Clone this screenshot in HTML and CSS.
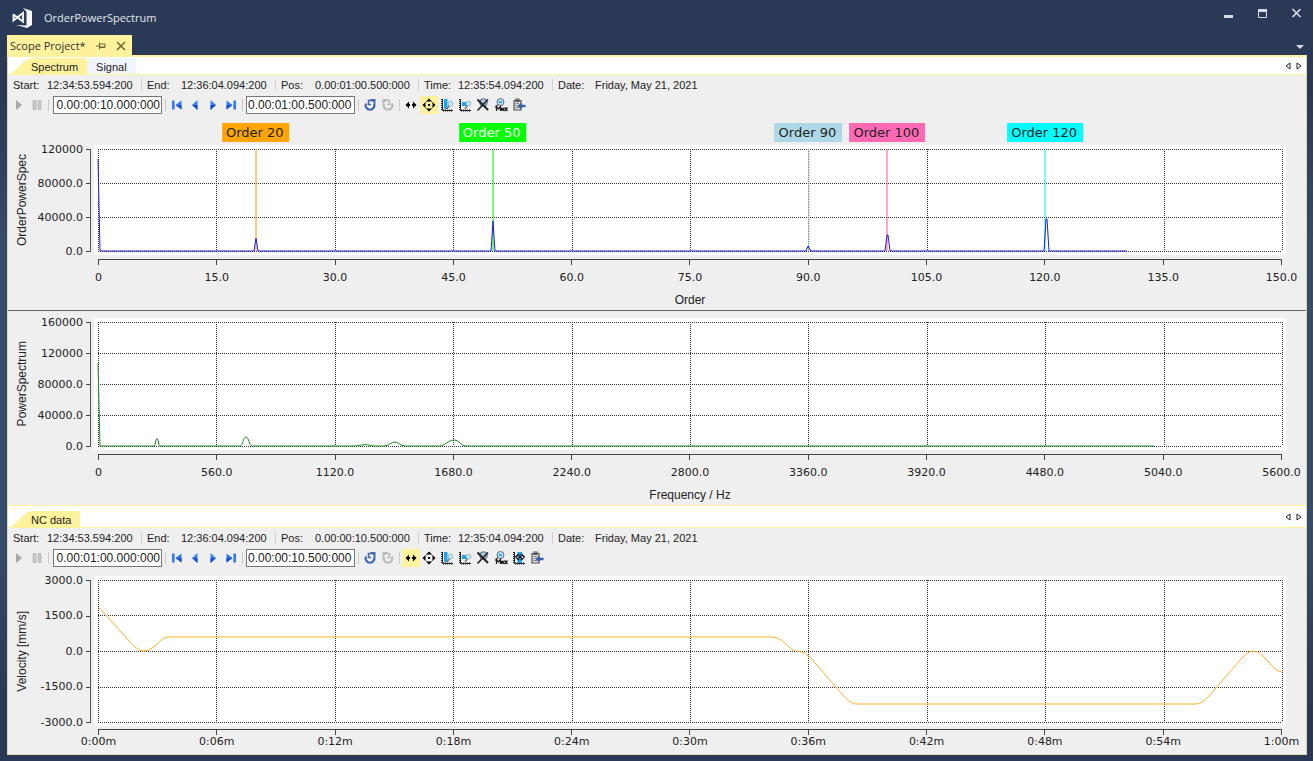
FILE: index.html
```html
<!DOCTYPE html>
<html lang="en">
<head>
<meta charset="utf-8">
<title>OrderPowerSpectrum</title>
<link rel="stylesheet" href="styles.css">
</head>
<body>
<svg class="sprite" aria-hidden="true">
  <symbol id="play" viewBox="0 0 16 16"><path d="M5 3L11 8L5 13Z" fill="#a9a9a9"/></symbol>
  <symbol id="pause" viewBox="0 0 16 16"><path d="M4 3.500H7V12.500H4ZM9 3.500H12V12.500H9Z" fill="#c9c9c9" stroke="#aaa" stroke-width=".6"/></symbol>
  <symbol id="first" viewBox="0 0 16 16"><path d="M3 3.500H5.600V12.500H3ZM12.500 3.500V12.500L6.500 8Z" fill="#3478ee"/><path d="M12.500 8V12.500L6.500 8Z" fill="#1c50c8"/></symbol>
  <symbol id="prev" viewBox="0 0 16 16"><path d="M10.500 3V13L5 8Z" fill="#3c80f4"/><path d="M10.500 8V13L5 8Z" fill="#1c50c8"/></symbol>
  <symbol id="next" viewBox="0 0 16 16"><path d="M5.500 3V13L11 8Z" fill="#3c80f4"/><path d="M5.500 8V13L11 8Z" fill="#1c50c8"/></symbol>
  <symbol id="last" viewBox="0 0 16 16"><path d="M13 3.500H10.400V12.500H13ZM3.500 3.500V12.500L9.500 8Z" fill="#3478ee"/><path d="M3.500 8V12.500L9.500 8Z" fill="#1c50c8"/></symbol>
  <symbol id="undo" viewBox="0 0 16 16"><path d="M4 6.500A4.400 4.400 0 1 0 12 6.500" fill="none" stroke="#4268b4" stroke-width="2.200"/><path d="M10 3.500H6.500V7.500H9" fill="none" stroke="#4268b4" stroke-width="1.600"/><path d="M8 2H13.500V7.500Z" fill="#4268b4"/></symbol>
  <symbol id="redo" viewBox="0 0 16 16"><path d="M12 6.500A4.400 4.400 0 1 1 4 6.500" fill="none" stroke="#bbb" stroke-width="2.200"/><path d="M6 3.500H9.500V7.500H7" fill="none" stroke="#bbb" stroke-width="1.600"/><path d="M8 2H2.500V7.500Z" fill="#bbb"/></symbol>
  <symbol id="scroll" viewBox="0 0 16 16"><path d="M2.500 8L6 4.500V7H7V9H6V11.500ZM13.500 8L10 4.500V7H9V9H10V11.500Z"/></symbol>
  <symbol id="pan" viewBox="0 0 16 16"><path d="M8 1.500L11 4.500H5ZM8 14.500L5 11.500H11ZM1.500 8L4.500 5V11ZM14.500 8L11.500 11V5ZM7 7H9V9H7Z"/><path d="M4.500 5.500L5.500 4.500M10.500 4.500L11.500 5.500M4.500 10.500L5.500 11.500M11.500 10.500L10.500 11.500" stroke="#222"/></symbol>
  <symbol id="axes" viewBox="0 0 16 16"><path d="M3 2V13" stroke="#222" stroke-width="2" stroke-dasharray="1 1"/><path d="M3.500 2V13.500H14" fill="none" stroke="#222"/><path d="M4 13.500H14" stroke="#222" stroke-width="2" stroke-dasharray="1 1"/></symbol>
  <symbol id="lens" viewBox="0 0 16 16"><path d="M8 12L10.500 8.500" stroke="#777" stroke-width="1.500"/><circle cx="11.500" cy="6.500" r="2.300" fill="#cdeafb" stroke="#94b7cb"/></symbol>
  <symbol id="zoomx" viewBox="0 0 16 16"><use href="#axes"/><path d="M5 2H8.500V12H5Z" fill="#1ca4f2"/><use href="#lens"/></symbol>
  <symbol id="zoomxy" viewBox="0 0 16 16"><use href="#axes"/><path d="M5 5H10V9H5Z" fill="#1ca4f2"/><use href="#lens"/></symbol>
  <symbol id="zoomoff" viewBox="0 0 16 16"><circle cx="8.500" cy="5.500" r="3.800" fill="#a4cbe2" stroke="#567"/><path d="M2.500 2.500L13 13" stroke="#222" stroke-width="2"/><path d="M13 2.500L2.500 13.500" stroke="#222" stroke-width="1.600"/></symbol>
  <symbol id="zoommax" viewBox="0 0 16 16"><circle cx="7.500" cy="5" r="3.500" fill="#b9dff3" stroke="#5d7583"/><path d="M6 5H9" stroke="#1a91dc" stroke-width="1.500"/><path d="M5 7.500L2 10.500" stroke="#666" stroke-width="1.500"/><path d="M3.500 14V9.500L5.500 12L7.500 9.500V14M8.500 14V11.500H10.500V14M8.500 12.800H10.500M11.500 10.500L14.500 14M14.500 10.500L11.500 14" fill="none" stroke="#222" stroke-width="1.300"/></symbol>
  <symbol id="center" viewBox="0 0 16 16"><use href="#axes"/><path d="M6.500 2H11V13H6.500Z" fill="#1ca4f2"/><path d="M4.500 7L8 4M4.500 7L8 10M13.500 7L10 4M13.500 7L10 10" fill="none" stroke="#111" stroke-width="1.600"/><circle cx="9" cy="7" r="1.400"/></symbol>
  <symbol id="export" viewBox="0 0 16 16"><path d="M3 3.500H10V13H3ZM5 2H8V4.500H5Z" fill="#ddd" stroke="#555" stroke-width="1.200"/><path d="M4.500 6.500H8M4.500 8.500H7M4.500 10.500H8" stroke="#888"/><path d="M14.500 9H9" stroke="#315fae" stroke-width="2.500"/><path d="M10.500 5.500V12.500L6.500 9Z" fill="#315fae"/></symbol>
</svg>

<div class="window">
  <header class="titlebar">
    <svg class="logo" viewBox="0 0 20 20" aria-hidden="true"><path d="M11 0L20 3V17L15 20L4 17L14.500 17.500V3.500Z" fill="#f4f6fa"/><path d="M1.500 6V12.500L11 5V13.500L1.500 6.500" fill="none" stroke="#f4f6fa" stroke-width="1.900"/></svg>
    <h1>OrderPowerSpectrum</h1>
    <div class="caption-buttons">
      <button aria-label="Minimize"><svg viewBox="0 0 12 12"><path d="M1 8H10V11H1Z" fill="#d6dbe6"/></svg></button>
      <button aria-label="Maximize"><svg viewBox="0 0 12 12"><path d="M1.500 2.500H9.500V10.500H1.500Z" fill="none" stroke="#d6dbe6"/><path d="M1 2H10V5H1Z" fill="#d6dbe6"/></svg></button>
      <button aria-label="Close"><svg viewBox="0 0 12 12"><path d="M1.500 2L9.500 10M9.500 2L1.500 10" stroke="#d6dbe6" stroke-width="1.700"/></svg></button>
    </div>
  </header>

  <div class="documents">
    <div class="document-tab">
      <span>Scope Project*</span>
      <button aria-label="Pin"><svg viewBox="0 0 10 10"><path d="M0 5H3.500M3.500 1.500V8.500M3.500 3H9V6.500H3.500M3.500 6H9" fill="none" stroke="#6d6236"/></svg></button>
      <button aria-label="Close tab"><svg viewBox="0 0 10 10"><path d="M1 1L9 9M9 1L1 9" stroke="#6d6236" stroke-width="1.500"/></svg></button>
    </div>
    <button class="document-list" aria-label="Open documents"><svg viewBox="0 0 8 8"><path d="M0 2H8L4 6Z" fill="#d6dbe6"/></svg></button>
  </div>

  <main class="workspace">
    <nav class="strip">
      <button class="tab tab-active">Spectrum</button>
      <button class="tab">Signal</button>
      <div class="strip-nav">
        <button aria-label="Previous tab"><svg viewBox="0 0 6 8"><path d="M5 1V7L1 4Z" fill="none" stroke="#222"/></svg></button>
        <button aria-label="Next tab"><svg viewBox="0 0 6 8"><path d="M1 1V7L5 4Z" fill="none" stroke="#222"/></svg></button>
      </div>
    </nav>
    <dl class="status">
      <div class="seg"><dt>Start:</dt><dd>12:34:53.594:200</dd></div>
      <div class="seg"><dt>End:</dt><dd>12:36:04.094:200</dd></div>
      <div class="seg seg-long"><dt>Pos:</dt><dd>0.00:01:00.500:000</dd></div>
      <div class="seg"><dt>Time:</dt><dd>12:35:54.094:200</dd></div>
      <div class="seg"><dt>Date:</dt><dd>Friday, May 21, 2021</dd></div>
    </dl>
    <div class="toolbar">
      <button aria-label="Play"><svg><use href="#play"/></svg></button>
      <button aria-label="Pause"><svg><use href="#pause"/></svg></button>
      <i></i>
      <input class="width" aria-label="Display width" value="0.00:00:10.000:000">
      <i></i>
      <button aria-label="First"><svg><use href="#first"/></svg></button>
      <button aria-label="Back"><svg><use href="#prev"/></svg></button>
      <button aria-label="Forward"><svg><use href="#next"/></svg></button>
      <button aria-label="Last"><svg><use href="#last"/></svg></button>
      <i></i>
      <input aria-label="Position" value="0.00:01:00.500:000">
      <i></i>
      <button aria-label="Undo"><svg><use href="#undo"/></svg></button>
      <button aria-label="Redo"><svg><use href="#redo"/></svg></button>
      <i></i>
      <button aria-label="Scroll"><svg><use href="#scroll"/></svg></button>
      <button class="on" aria-label="Pan"><svg><use href="#pan"/></svg></button>
      <button aria-label="Zoom X"><svg><use href="#zoomx"/></svg></button>
      <button aria-label="Zoom XY"><svg><use href="#zoomxy"/></svg></button>
      <button aria-label="Zoom off"><svg><use href="#zoomoff"/></svg></button>
      <button aria-label="Zoom max"><svg><use href="#zoommax"/></svg></button>
      <button aria-label="Export"><svg><use href="#export"/></svg></button>
    </div>

    <section class="chart chart-order">
      <div class="tags">
        <span class="tag orange" style="left:13.33%">Order 20</span>
        <span class="tag lime" style="left:33.33%">Order 50</span>
        <span class="tag lightblue" style="left:60%">Order 90</span>
        <span class="tag pink" style="left:66.67%">Order 100</span>
        <span class="tag cyan" style="left:80%">Order 120</span>
      </div>
      <div class="y-title">OrderPowerSpec</div>
      <div class="scale"><div class="y-axis"><span>120000</span><span>80000.0</span><span>40000.0</span><span>0.0</span></div></div>
      <div class="plot">
        <svg viewBox="0 0 1184 102" preserveAspectRatio="none">
          <path class="grid" d="M0 0H1184M0 34H1184M0 68H1184M0 102H1184"/>
          <path class="grid" d="M0 0V102M118 0V102M237 0V102M355 0V102M474 0V102M592 0V102M710 0V102M829 0V102M1066 0V102M1184 0V102"/>
          <path class="cursor" stroke="#ff9800" d="M158 0V102"/>
          <path class="cursor" stroke="#00f000" d="M395 0V102"/>
          <path class="cursor" stroke="#add8e6" d="M711 0V102"/>
          <path class="cursor" stroke="#ff4fa6" d="M789 0V102"/>
          <path class="cursor" stroke="#00f0f4" d="M947 0V102"/>
          <path class="series" stroke="#2020d8" d="M0 10L2 102H156L158 89L160 102H393L395 72L397 102H708L710 97L713 102H787L789 86H790L792 102H946L948 70H949L951 102H1029"/>
        </svg>
      </div>
      <div class="foot">
        <div class="x-axis"><span>0</span><span>15.0</span><span>30.0</span><span>45.0</span><span>60.0</span><span>75.0</span><span>90.0</span><span>105.0</span><span>120.0</span><span>135.0</span><span>150.0</span></div>
        <div class="x-title">Order</div>
      </div>
    </section>

    <section class="chart chart-power">
      <div class="y-title">PowerSpectrum</div>
      <div class="scale"><div class="y-axis"><span>160000</span><span>120000</span><span>80000.0</span><span>40000.0</span><span>0.0</span></div></div>
      <div class="plot">
        <svg viewBox="0 0 1184 124" preserveAspectRatio="none">
          <path class="grid" d="M0 0H1184M0 31H1184M0 62H1184M0 93H1184M0 124H1184"/>
          <path class="grid" d="M0 0V124M118 0V124M237 0V124M355 0V124M474 0V124M592 0V124M710 0V124M829 0V124M947 0V124M1066 0V124M1184 0V124"/>
          <path class="series" stroke="#228b22" d="M0 41L2 124H56Q57 124 58 118Q59 115 60 118Q61 124 62 124H142C145 124 145 115 148 115S151 124 154 124H258Q267 121 276 124H286C291 124 293 120 297 120S302 124 307 124H341C347 124 350 118 356 118S362 124 368 124H1056"/>
        </svg>
      </div>
      <div class="foot">
        <div class="x-axis"><span>0</span><span>560.0</span><span>1120.0</span><span>1680.0</span><span>2240.0</span><span>2800.0</span><span>3360.0</span><span>3920.0</span><span>4480.0</span><span>5040.0</span><span>5600.0</span></div>
        <div class="x-title">Frequency / Hz</div>
      </div>
    </section>

    <nav class="strip strip-lower">
      <button class="tab tab-active">NC data</button>
      <div class="strip-nav">
        <button aria-label="Previous tab"><svg viewBox="0 0 6 8"><path d="M5 1V7L1 4Z" fill="none" stroke="#222"/></svg></button>
        <button aria-label="Next tab"><svg viewBox="0 0 6 8"><path d="M1 1V7L5 4Z" fill="none" stroke="#222"/></svg></button>
      </div>
    </nav>
    <dl class="status">
      <div class="seg"><dt>Start:</dt><dd>12:34:53.594:200</dd></div>
      <div class="seg"><dt>End:</dt><dd>12:36:04.094:200</dd></div>
      <div class="seg seg-long"><dt>Pos:</dt><dd>0.00:00:10.500:000</dd></div>
      <div class="seg"><dt>Time:</dt><dd>12:35:04.094:200</dd></div>
      <div class="seg"><dt>Date:</dt><dd>Friday, May 21, 2021</dd></div>
    </dl>
    <div class="toolbar">
      <button aria-label="Play"><svg><use href="#play"/></svg></button>
      <button aria-label="Pause"><svg><use href="#pause"/></svg></button>
      <i></i>
      <input class="width" aria-label="Display width" value="0.00:01:00.000:000">
      <i></i>
      <button aria-label="First"><svg><use href="#first"/></svg></button>
      <button aria-label="Back"><svg><use href="#prev"/></svg></button>
      <button aria-label="Forward"><svg><use href="#next"/></svg></button>
      <button aria-label="Last"><svg><use href="#last"/></svg></button>
      <i></i>
      <input aria-label="Position" value="0.00:00:10.500:000">
      <i></i>
      <button aria-label="Undo"><svg><use href="#undo"/></svg></button>
      <button aria-label="Redo"><svg><use href="#redo"/></svg></button>
      <i></i>
      <button class="on" aria-label="Scroll"><svg><use href="#scroll"/></svg></button>
      <button aria-label="Pan"><svg><use href="#pan"/></svg></button>
      <button aria-label="Zoom X"><svg><use href="#zoomx"/></svg></button>
      <button aria-label="Zoom XY"><svg><use href="#zoomxy"/></svg></button>
      <button aria-label="Zoom off"><svg><use href="#zoomoff"/></svg></button>
      <button aria-label="Zoom max"><svg><use href="#zoommax"/></svg></button>
      <button aria-label="Center"><svg><use href="#center"/></svg></button>
      <button aria-label="Export"><svg><use href="#export"/></svg></button>
    </div>

    <section class="chart chart-nc">
      <div class="y-title">Velocity [mm/s]</div>
      <div class="scale"><div class="y-axis"><span>3000.0</span><span>1500.0</span><span>0.0</span><span>-1500.0</span><span>-3000.0</span></div></div>
      <div class="plot">
        <svg viewBox="0 0 1184 142" preserveAspectRatio="none">
          <path class="grid" d="M0 0H1184M0 35H1184M0 71H1184M0 107H1184M0 142H1184"/>
          <path class="grid" d="M0 0V142M118 0V142M237 0V142M355 0V142M474 0V142M592 0V142M710 0V142M829 0V142M947 0V142M1066 0V142M1184 0V142"/>
          <path class="series" stroke="#ffb02e" d="M0 27Q3 29 8 35L33 63Q40 71 46 71T58 65Q65 57 71 57H673Q681 57 688 64Q694 71 699 71Q706 71 712 77L743 113Q752 124 758 124H1098Q1103 124 1110 117L1143 79Q1150 71 1155 71Q1161 71 1168 79L1174 86Q1179 92 1184 92"/>
        </svg>
      </div>
      <div class="foot">
        <div class="x-axis"><span>0:00m</span><span>0:06m</span><span>0:12m</span><span>0:18m</span><span>0:24m</span><span>0:30m</span><span>0:36m</span><span>0:42m</span><span>0:48m</span><span>0:54m</span><span>1:00m</span></div>
      </div>
    </section>
  </main>
</div>
</body>
</html>
```

FILE: styles.css
```css
* { box-sizing: border-box; }
body { margin: 0; font: 11px/14px "Liberation Sans", Arial, sans-serif; color: #222; }
button { border: 0; padding: 0; background: none; font: inherit; color: inherit; display: flex; align-items: center; justify-content: center; }
.sprite { display: none; }

.window { min-height: 100vh; display: flex; flex-direction: column; padding: 0 6px 6px 7px; background: linear-gradient(#2a3955 0, #2a3955 12%, #364a6b 32%, #364a6b 72%, #2a3955 92%); }

.titlebar { display: flex; align-items: center; height: 35px; padding: 0 4px 0 5px; }
.logo { width: 20px; height: 20px; }
h1 { margin: 0 auto 0 12px; font: 11px/20px "Open Sans", sans-serif; color: #e4e8f0; }
.caption-buttons { display: flex; gap: 22px; align-self: flex-start; padding-top: 7px; }
.caption-buttons svg { display: block; width: 12px; height: 12px; }

.documents { display: flex; justify-content: space-between; align-items: flex-end; border-bottom: 2px solid #fdf0a0; }
.document-tab { display: flex; align-items: center; gap: 10px; height: 20px; padding: 2px 6px 0 3px; background: #fff29d; font: 11px/16px "Open Sans", sans-serif; color: #333; }
.document-tab svg { display: block; width: 10px; height: 10px; }
.document-list { padding: 0 3px 4px 0; }
.document-list svg { width: 8px; height: 8px; }

.workspace { flex: 1; display: flex; flex-direction: column; background: #efefef; border: solid #dcd9a6; border-width: 0 1px 1px; }

.strip { display: flex; align-items: flex-end; height: 18px; padding-left: 3px; background: #fff; border-bottom: 1px solid #fff29d; }
.tab { height: 16px; padding: 2px 9px 0; border-radius: 0 3px 0 0; background: #f0f4fb; }
.tab-active { padding-left: 20px; background: #fff29d; border-radius: 3px 3px 0 0; clip-path: polygon(0 100%, 15px 2px, 20px 0, 100% 0, 100% 100%); }
.strip-nav { display: flex; gap: 5px; align-self: center; margin-left: auto; padding-right: 4px; }
.strip-nav svg { display: block; width: 6px; height: 8px; }
.strip-lower { height: 23px; border-top: 1px solid #fff29d; }

.status { display: flex; align-items: center; height: 20px; margin: 0; padding-left: 5px; gap: 5px; }
.seg { display: flex; min-width: 129px; border-right: 1px solid #d0d0d0; line-height: 12px; }
.seg-long { min-width: 138px; }
.seg:last-child { border-right: 0; }
dt { width: 34px; }
.seg:last-child dt { width: 37px; }
dd { margin: 0; white-space: nowrap; }

.toolbar { display: flex; align-items: center; height: 20px; padding-left: 2px; }
.toolbar button { width: 18px; height: 18px; }
.toolbar svg { width: 16px; height: 16px; }
.toolbar .on { background: #fff29d; }
.toolbar i { width: 1px; height: 12px; margin: 0 2px; background: #ccc; }
.toolbar input { width: 109px; height: 18px; margin: 0 1px; padding: 0 1px; border: 1px solid #777; background: #fff; font: inherit; font-size: 12px; color: #222; }
.toolbar .width { margin-left: 2px; text-align: right; }

.chart { display: grid; grid-template-columns: 28px 58px minmax(0, 1fr) 20px; grid-template-rows: minmax(80px, 1fr) auto; }
.chart-order { flex: 1 1 196px; grid-template-rows: auto minmax(80px, 1fr) auto; border-bottom: 1px solid #666; }
.chart-power { flex: 1 1 194px; padding-top: 7px; }
.chart-nc { flex: 1 1 186px; padding-top: 8px; }

.tags { grid-column: 3; position: relative; height: 30px; margin: 0 4px; }
.tag { position: absolute; top: 8px; transform: translateX(-50%); padding: 0 6px 0 4px; font: 13px/19px "DejaVu Sans", Verdana, sans-serif; white-space: nowrap; }
.orange { background: #ffa500; }
.lime { background: #0f0; color: #fff; }
.lightblue { background: #add8e6; }
.pink { background: #ff69b4; }
.cyan { background: #0ff; }

.y-title { grid-column: 1; writing-mode: vertical-rl; transform: rotate(180deg); text-align: center; align-self: center; justify-self: center; font-size: 12px; white-space: nowrap; }
.scale { grid-column: 2; padding: 4px 3px 3px 0; display: flex; justify-content: flex-end; }
.y-axis { flex: 1; display: flex; flex-direction: column; justify-content: space-between; border-right: 1px solid #555; font-family: "DejaVu Sans", Verdana, sans-serif; }
.y-axis span { display: flex; align-items: center; justify-content: flex-end; gap: 3px; height: 1px; }
.y-axis span::after { content: ""; width: 4px; height: 1px; background: #444; }

.plot { grid-column: 3; min-height: 0; padding: 4px; background: #fff; }
.plot svg { display: block; width: 100%; height: 100%; overflow: visible; contain: size; }
.plot path { fill: none; vector-effect: non-scaling-stroke; }
.grid { stroke: #333; stroke-dasharray: 1 1; shape-rendering: crispEdges; }

.foot { grid-column: 3; padding: 4px 4px 3px; }
.x-axis { display: flex; justify-content: space-between; border-top: 1px solid #444; font-family: "DejaVu Sans", Verdana, sans-serif; }
.x-axis span { display: flex; flex-direction: column; align-items: center; gap: 6px; width: 1px; white-space: nowrap; }
.x-axis span::before { content: ""; width: 1px; height: 5px; background: #444; }
.x-title { margin-top: 8px; text-align: center; font-size: 12px; }
.chart-nc .foot { padding-bottom: 5px; padding-top: 3px; }
.chart-nc .x-axis span { gap: 0; }
```
